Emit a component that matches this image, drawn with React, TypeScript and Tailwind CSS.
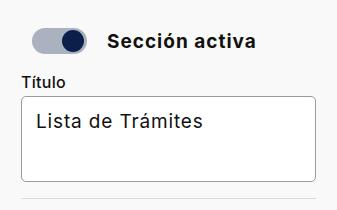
import React, { useState } from 'react'

export default function App() {
  const [active, setActive] = useState(true)
  const [title, setTitle] = useState('Lista de Trámites')

  return (
    <div className="w-[337px] h-[210px] bg-[#f9f9f9] px-[21px] pt-[28px] font-['Inter',sans-serif] text-[#111]">
      <div className="flex items-center gap-[20px] pl-[11px]">
        <button
          onClick={() => setActive(!active)}
          className="w-[55px] h-[26px] rounded-full bg-[#aab2c0] flex items-center justify-end px-[3px]"
        >
          <span className="w-[22px] h-[22px] rounded-full bg-[#0b1f4b] block" />
        </button>
        <span className="text-[19px] font-bold tracking-[1px] leading-none">
          Sección activa
        </span>
      </div>

      <label className="block mt-[18px] text-[16px] font-medium tracking-[0.3px] leading-[20px]">
        Título
      </label>
      <textarea
        value={title}
        onChange={(e) => setTitle(e.target.value)}
        className="mt-[4px] block w-full h-[86px] resize-none bg-white border border-[#9a9a9a] rounded-[5px] px-[14px] pt-[11px] pb-[8px] text-[19px] tracking-[0.85px] leading-[28px] text-[#111] outline-none"
      />
      <div className="mt-[16px] h-px bg-[#dcdcdc]" />
    </div>
  )
}
